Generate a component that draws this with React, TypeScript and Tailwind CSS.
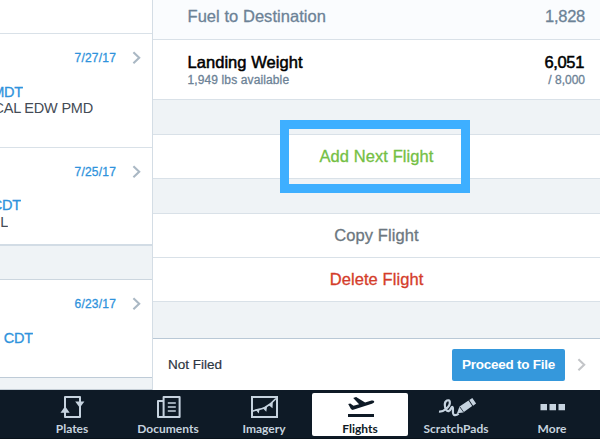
import type { ReactNode } from "react";

const medium = "[-webkit-text-stroke:0.3px_currentColor]";

function Chevron({ color = "#aab8c4" }: { color?: string }) {
  return (
    <svg width="9" height="14" viewBox="0 0 9 14" fill="none" stroke={color} strokeWidth="2.1" className="shrink-0">
      <path d="M1.4 1.2 7.2 6.7 1.4 12.2" />
    </svg>
  );
}

function FlightEntry({ date, time, timeEnd, route, routeEnd, className }: {
  date: string; time: string; timeEnd: string; route?: string; routeEnd?: string; className: string;
}) {
  return (
    <div className={`flex shrink-0 flex-col bg-white pt-4 ${className}`}>
      <div className="flex h-[16px] items-center justify-between pr-[11px]">
        <span className={`flex w-[116px] justify-end text-[12px] tracking-[0.2px] text-[#2f93dc] ${medium}`}>{date}</span>
        <Chevron />
      </div>
      <div className={`flex h-[16px] items-center justify-end overflow-hidden text-[14.5px] tracking-[-0.2px] whitespace-nowrap text-[#2f93dc] ${timeEnd}`}>
        <span className={medium}>{time}</span>
      </div>
      {route && (
        <div className={`flex items-center justify-end overflow-hidden text-[14.5px] tracking-[-0.2px] whitespace-nowrap text-[#444b55] ${routeEnd}`}>
          <span>{route}</span>
        </div>
      )}
    </div>
  );
}

function Action({ label, className }: { label: string; className: string }) {
  return (
    <div className={`flex h-11 shrink-0 items-center justify-center border-b border-[#d9e1e8] bg-white pb-px text-[16.5px] tracking-[0.08px] ${className}`}>
      <span className={medium}>{label}</span>
    </div>
  );
}

function Tab({ label, active, children }: { label: string; active?: boolean; children: ReactNode }) {
  return (
    <div className={`flex h-[43px] w-24 flex-col items-center rounded-[2px] pt-[1px] ${active ? "bg-white text-[#0e1a26]" : "text-[#c6d3df]"}`}>
      <svg width="32" height="26" viewBox="0 0 32 26" fill="none" stroke="currentColor" strokeWidth="2" className="overflow-visible">
        {children}
      </svg>
      <span className="font-['Lato',sans-serif] text-[12px] leading-[17px] font-bold">{label}</span>
    </div>
  );
}

export default function App() {
  return (
    <div className="flex h-[439px] w-[600px] flex-col overflow-hidden bg-[#eff3f6] font-['Liberation_Sans',Arial,sans-serif]">
      <div className="flex h-[390px] shrink-0">
        <aside className="flex w-[153px] shrink-0 flex-col overflow-hidden border-r border-[#d4dde5]">
          <div className="h-[34px] shrink-0 border-b border-[#d9e1e8] bg-white" />
          <FlightEntry date="7/27/17" time="MDT" timeEnd="mt-[19px] w-[23px]" route="CAL EDW PMD" routeEnd="h-[15px] w-[93px]" className="h-[114px] border-b border-[#d9e1e8]" />
          <FlightEntry date="7/25/17" time="CDT" timeEnd="mt-[18px] w-[21px]" route="L" routeEnd="h-[17px] w-[8px]" className="h-[98px] border-b-2 border-[#d2dce5]" />
          <div className="h-[34px] shrink-0 border-b border-[#ccd6df]" />
          <FlightEntry date="6/23/17" time="CDT" timeEnd="mt-[19px] w-[33px]" className="h-[98px] border-b border-[#becbd7]" />
          <div className="flex-1 border-b border-[#c5ced6]" />
        </aside>

        <main className="flex w-[447px] flex-col">
          <div className="flex h-10 shrink-0 justify-between border-b border-[#d9e1e8] bg-[#fafcfe] pt-[6px] pr-[15px] pl-[34.5px] text-[16.5px] leading-5 text-[#6c8296]">
            <span className={`tracking-[0.05px] ${medium}`}>Fuel to Destination</span>
            <span className={`tracking-[-0.25px] ${medium}`}>1,828</span>
          </div>
          <div className="flex h-[60px] shrink-0 justify-between border-b border-[#d9e1e8] bg-white pt-[12px] pr-[15px] pl-[34.5px]">
            <div className="flex flex-col">
              <span className="text-[16.5px] leading-5 tracking-[0.05px] text-black [-webkit-text-stroke:0.5px_black]">Landing Weight</span>
              <span className={`pt-px text-[12px] leading-[14px] tracking-[0.12px] text-[#6c8296] ${medium}`}>1,949 lbs available</span>
            </div>
            <div className="flex flex-col items-end">
              <span className="pr-px text-[16.5px] leading-5 tracking-[-0.35px] text-black [-webkit-text-stroke:0.5px_black]">6,051</span>
              <span className={`pt-px text-[12px] leading-[14px] text-[#6c8296] ${medium}`}>/ 8,000</span>
            </div>
          </div>
          <div className="h-[35px] shrink-0 border-b border-[#d9e1e8]" />
          <div className="relative shrink-0">
            <Action label="Add Next Flight" className="text-[#74c044]" />
            <div className="absolute top-[-15px] left-[127px] h-[73px] w-[190px] border-[9px] border-[#3eafff]" />
          </div>
          <div className="h-[35px] shrink-0 border-b border-[#d9e1e8]" />
          <Action label="Copy Flight" className="text-[#6c7780]" />
          <Action label="Delete Flight" className="text-[#d43c2a]" />
          <div className="h-[37px] shrink-0 border-b border-[#b9c8d6]" />
          <div className="flex h-[51px] shrink-0 items-center bg-white pr-[14px] pl-[15px]">
            <span className="flex-1 pt-px text-[13.5px] text-[#2d3642] [-webkit-text-stroke:0.2px_currentColor]">Not Filed</span>
            <button className="mr-3 h-8 w-[113px] rounded-[2px] bg-[#3598dc] pt-px text-[13.5px] font-bold tracking-[-0.25px] whitespace-nowrap text-white">Proceed to File</button>
            <Chevron color="#c3c5c8" />
          </div>
        </main>
      </div>

      <nav className="flex h-[49px] shrink-0 border-b border-[#08121b] bg-[#0e1a26] pt-[3px] pl-6">
        <Tab label="Plates">
          <path d="M9 3h15v20H9z" strokeLinejoin="round" />
          <path d="M19.2 7.5h9.2l-4.6 6.3zM4.5 18.7h9.2L9.1 12.2z" fill="currentColor" stroke="none" />
        </Tab>
        <Tab label="Documents">
          <path d="M11.6 3h16v20h-16zM11.6 7H6v16h5.6" strokeLinejoin="round" />
          <path d="M15.8 9h8M15.8 13h8M15.8 17h8" strokeWidth="1.6" />
        </Tab>
        <Tab label="Imagery">
          <path d="M4 3h25v20H4z" />
          <path d="M4 17.5c4-2 8-1.6 12.5-3.8S24 9 28 4.5" strokeWidth="1.7" />
          <path d="m7.5 15.6 3.2 4 1-4.8zM14.5 14l3.8 3.8.8-5.6zM20.5 11l4 3.3.3-6.3z" fill="currentColor" stroke="none" />
        </Tab>
        <Tab label="Flights" active>
          <path d="M4 20h26v3H4zM4.2 10l2.1-.6 3.2 2.4 5.6-1.6L9.2 4l2.9-.9 9 5.3 5.6-1.7c1.7-.4 3.2-.1 3.5.8.2.9-.8 1.8-2.3 2.3L9.2 15.8c-1 .3-1.8-.2-2.4-1.1z" fill="currentColor" stroke="none" />
        </Tab>
        <Tab label="ScratchPads">
          <path d="M-1 17.5c4 .5 11.5-4.5 10.8-9.7C9.2 4.8 4.6 6.4 4.8 11c.2 4.4 2.1 6.8 4 6.1 2.6-1.2 2.2-4.6 3.7-4.1 1.4.5-.8 6.2 1.4 7.8 1.5 1 3 .3 4.8-1.1" strokeWidth="2.2" />
          <path d="m17 19.2 2.5-6.7 9-5.9 3.7 5.5-9 6.3zM29.3 6.1l3-2 3.8 5.5-3 2.1z" fill="currentColor" stroke="none" />
          <path d="m19.8 12.8 3.8 5.3" stroke="#0e1a26" strokeWidth=".8" />
        </Tab>
        <Tab label="More">
          <path d="M4.5 10h6.5v6.3H4.5zM13.5 10H20v6.3h-6.5zM22.5 10H29v6.3h-6.5z" fill="currentColor" stroke="none" />
        </Tab>
      </nav>
    </div>
  );
}
